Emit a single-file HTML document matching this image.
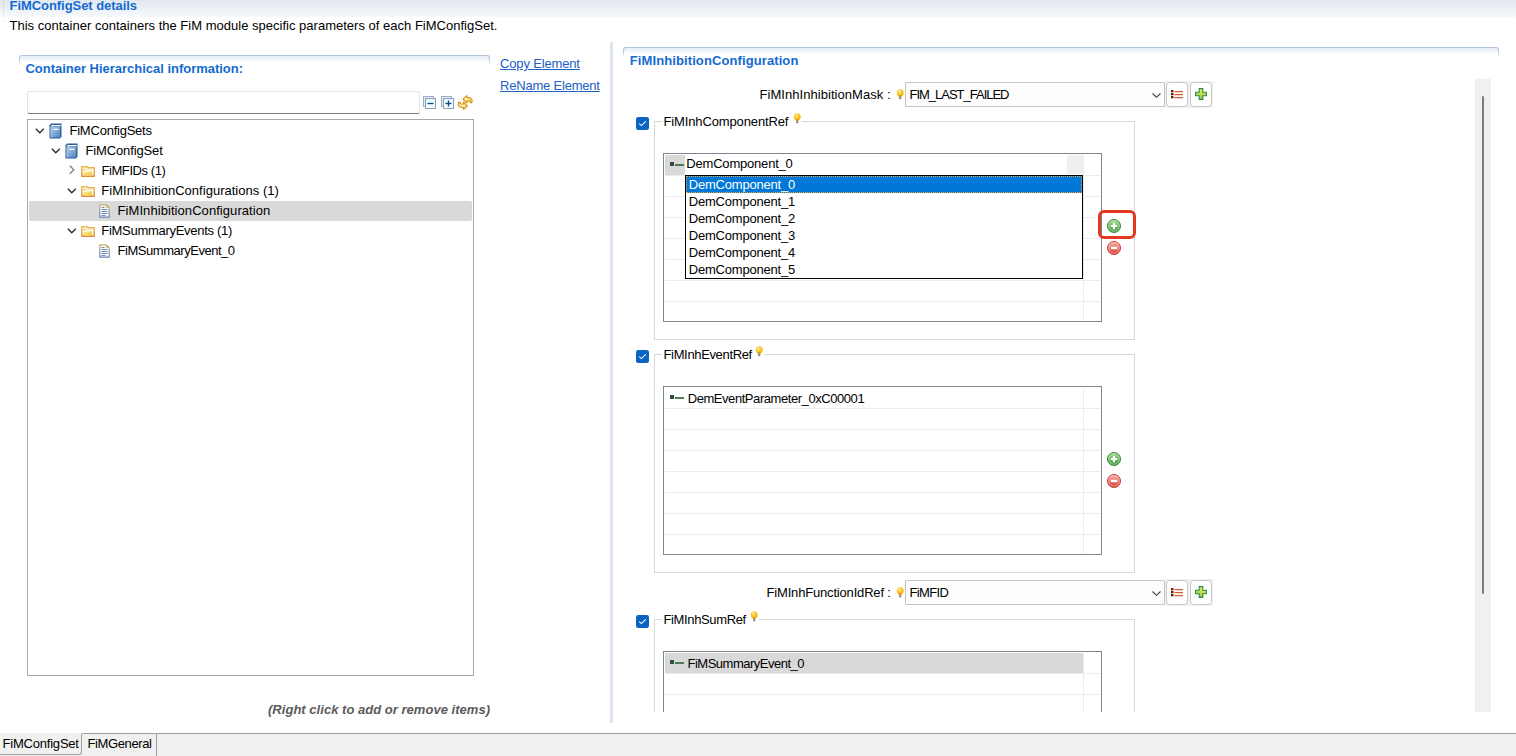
<!DOCTYPE html>
<html><head><meta charset="utf-8"><style>
*{margin:0;padding:0;box-sizing:border-box}
html,body{width:1516px;height:756px;overflow:hidden;background:#fff;font-family:"Liberation Sans",sans-serif;color:#000}
.a{position:absolute}
.t{position:absolute;white-space:nowrap;font-size:13px;line-height:15px}
svg{overflow:visible}
</style></head><body>
<div class="a" style="left:0px;top:0px;width:1516px;height:17px;background:linear-gradient(#e2e8f1,#f7f9fb)"></div>
<div class="a" style="left:3px;top:0px;width:1px;height:22px;background:linear-gradient(#cdd6e4,#f3f5f9)"></div>
<div class="t" style="left:9.5px;top:-2.01px;font-size:13px;font-weight:bold;color:#146ad0;letter-spacing:-0.055px;">FiMConfigSet details</div>
<div class="t" style="left:9.5px;top:17.99px;font-size:13px;letter-spacing:0.011px;">This container containers the FiM module specific parameters of each FiMConfigSet.</div>
<div class="a" style="left:19px;top:55px;width:471px;height:10px;border:1px solid #b2c3db;border-bottom:none;border-radius:3px 3px 0 0;background:linear-gradient(#e6edf6,#fff 7px)"></div><div class="a" style="left:18px;top:59px;width:473px;height:7px;background:linear-gradient(rgba(255,255,255,0),#fff)"></div>
<div class="t" style="left:25.5px;top:60.59px;font-size:13px;font-weight:bold;color:#146ad0;letter-spacing:-0.019px;">Container Hierarchical information:</div>
<div class="a" style="left:27px;top:91px;width:393px;height:23px;border:1px solid #e4e4e4;border-bottom:1px solid #7a7a7a;border-radius:2px"></div>
<svg width="0" height="0" style="position:absolute"><defs><linearGradient id="gsq" x1="0" y1="0" x2="0" y2="1"><stop offset="0" stop-color="#e4f6ff"/><stop offset="1" stop-color="#f4fbff"/></linearGradient><linearGradient id="gbook" x1="0" y1="0" x2="1" y2="1"><stop offset="0" stop-color="#b4d0ec"/><stop offset="1" stop-color="#4f83c1"/></linearGradient><linearGradient id="gfold" x1="0" y1="0" x2="1" y2="1"><stop offset="0" stop-color="#fbf1c4"/><stop offset="1" stop-color="#f0c419"/></linearGradient><linearGradient id="gfoldb" x1="0" y1="0" x2="0" y2="1"><stop offset="0" stop-color="#e6b74a"/><stop offset="1" stop-color="#e08c34"/></linearGradient><linearGradient id="gpage" x1="0" y1="0" x2="0" y2="1"><stop offset="0" stop-color="#c8b070"/><stop offset="1" stop-color="#6f84b0"/></linearGradient><radialGradient id="gbulb" cx="0.4" cy="0.35" r="0.6"><stop offset="0" stop-color="#ffe27a"/><stop offset="1" stop-color="#f7b500"/></radialGradient><linearGradient id="gplus" x1="0" y1="0" x2="0" y2="1"><stop offset="0" stop-color="#e9ef5a"/><stop offset="1" stop-color="#9cc540"/></linearGradient><linearGradient id="gadd" x1="0" y1="0" x2="0" y2="1"><stop offset="0" stop-color="#a6dc95"/><stop offset="1" stop-color="#3a9638"/></linearGradient><linearGradient id="grem" x1="0" y1="0" x2="0" y2="1"><stop offset="0" stop-color="#f9b7ad"/><stop offset="1" stop-color="#d6352c"/></linearGradient><radialGradient id="gsync" cx="0.4" cy="0.4" r="0.7"><stop offset="0" stop-color="#fffbe0"/><stop offset="1" stop-color="#f3cb45"/></radialGradient></defs></svg>
<svg class="a" style="left:423px;top:96px" width="14" height="14" viewBox="0 0 14 14"><rect x="0.5" y="0.5" width="10" height="10" fill="#d8f0fd" stroke="#a3abc0"/><rect x="2.5" y="2.5" width="10" height="10" fill="url(#gsq)" stroke="#959db3"/><path d="M4.5 7.5H10.5" stroke="#0c4a7a" stroke-width="1.3"/></svg>
<svg class="a" style="left:441px;top:96px" width="14" height="14" viewBox="0 0 14 14"><rect x="0.5" y="0.5" width="10" height="10" fill="#d8f0fd" stroke="#a3abc0"/><rect x="2.5" y="2.5" width="10" height="10" fill="url(#gsq)" stroke="#959db3"/><path d="M4.5 7.5H10.5" stroke="#0c4a7a" stroke-width="1.3"/><path d="M7.5 4.5V10.5" stroke="#0c4a7a" stroke-width="1.3"/></svg>
<svg class="a" style="left:458px;top:95px" width="15" height="16" viewBox="0 0 15 16"><polygon points="5.0,4.2 8.8,0.6 9.2,2.6 12.2,2.9 14.0,4.6 13.9,7.6 12.2,7.7 11.6,6.0 9.2,5.8 8.8,7.9" fill="url(#gsync)" stroke="#d38f0a" stroke-width="1.1" stroke-linejoin="round"/><polygon points="9.4,10.8 5.6,14.4 5.2,12.4 2.2,12.1 0.4,10.4 0.5,7.4 2.2,7.3 2.8,9.0 5.2,9.2 5.6,7.1" fill="url(#gsync)" stroke="#d38f0a" stroke-width="1.1" stroke-linejoin="round"/></svg>
<div class="a" style="left:27px;top:119px;width:447px;height:557px;border:1px solid #a6a8b1"></div>
<div class="a" style="left:29px;top:201px;width:443px;height:20px;background:#d9d9d9;border-radius:2px"></div>
<svg class="a" style="left:35px;top:128px" width="10" height="6" viewBox="0 0 10 6"><path d="M0.8 0.8 L4.8 4.8 L8.8 0.8" fill="none" stroke="#2b2b2b" stroke-width="1.3"/></svg>
<svg class="a" style="left:49px;top:123px" width="13" height="16" viewBox="0 0 13 16"><path d="M0.5 2.2 L2.2 0.5 H12.5 V13.8 L10.8 15.5 H0.5 Z" fill="#2f5b98"/><rect x="1.6" y="3.4" width="9.6" height="11" fill="url(#gbook)"/><rect x="1.6" y="3.4" width="1.4" height="11" fill="#a9c8ea" opacity="0.8"/><rect x="2.2" y="2" width="9.6" height="1.1" fill="#fff"/><rect x="4.6" y="5.8" width="5" height="1.2" fill="#fff"/></svg>
<div class="t" style="left:69.5px;top:122.99px;font-size:13px;letter-spacing:-0.230px;">FiMConfigSets</div>
<svg class="a" style="left:51px;top:148px" width="10" height="6" viewBox="0 0 10 6"><path d="M0.8 0.8 L4.8 4.8 L8.8 0.8" fill="none" stroke="#2b2b2b" stroke-width="1.3"/></svg>
<svg class="a" style="left:65px;top:143px" width="13" height="16" viewBox="0 0 13 16"><path d="M0.5 2.2 L2.2 0.5 H12.5 V13.8 L10.8 15.5 H0.5 Z" fill="#2f5b98"/><rect x="1.6" y="3.4" width="9.6" height="11" fill="url(#gbook)"/><rect x="1.6" y="3.4" width="1.4" height="11" fill="#a9c8ea" opacity="0.8"/><rect x="2.2" y="2" width="9.6" height="1.1" fill="#fff"/><rect x="4.6" y="5.8" width="5" height="1.2" fill="#fff"/></svg>
<div class="t" style="left:85.5px;top:142.99px;font-size:13px;letter-spacing:-0.133px;">FiMConfigSet</div>
<svg class="a" style="left:69px;top:165px" width="6" height="10" viewBox="0 0 6 10"><path d="M0.8 0.8 L4.8 4.8 L0.8 8.8" fill="none" stroke="#808080" stroke-width="1.3"/></svg>
<svg class="a" style="left:81px;top:166px" width="14" height="11" viewBox="0 0 14 11"><path d="M0.8 0.8 H6 L7 1.8 H13.2 V10.2 H0.8 Z" fill="#fff" stroke="url(#gfoldb)" stroke-width="1.4" stroke-linejoin="round"/><path d="M2 2.5 H4 L5 3.3 H11 V4 H5 L3.8 5 H2 Z" fill="#f3d36a" opacity="0.8"/><path d="M2 6 H4.5 L5.5 5.3 H11.2 V9.3 H2 Z" fill="url(#gfold)"/></svg>
<div class="t" style="left:101.5px;top:162.99px;font-size:13px;letter-spacing:-0.429px;">FiMFIDs (1)</div>
<svg class="a" style="left:67px;top:188px" width="10" height="6" viewBox="0 0 10 6"><path d="M0.8 0.8 L4.8 4.8 L8.8 0.8" fill="none" stroke="#2b2b2b" stroke-width="1.3"/></svg>
<svg class="a" style="left:81px;top:186px" width="14" height="11" viewBox="0 0 14 11"><path d="M0.8 0.8 H6 L7 1.8 H13.2 V10.2 H0.8 Z" fill="#fff" stroke="url(#gfoldb)" stroke-width="1.4" stroke-linejoin="round"/><path d="M2 2.5 H4 L5 3.3 H11 V4 H5 L3.8 5 H2 Z" fill="#f3d36a" opacity="0.8"/><path d="M2 6 H4.5 L5.5 5.3 H11.2 V9.3 H2 Z" fill="url(#gfold)"/></svg>
<div class="t" style="left:101.3px;top:182.99px;font-size:13px;letter-spacing:0.017px;">FiMInhibitionConfigurations (1)</div>
<svg class="a" style="left:99px;top:204px" width="11" height="14" viewBox="0 0 11 14"><path d="M0.8 0.8 H7.2 L10.2 3.8 V13.2 H0.8 Z" fill="#f6f9ff" stroke="url(#gpage)" stroke-width="1.2"/><path d="M7.2 0.8 L10.2 3.8 H7.2 Z" fill="#e0a848"/><path d="M2.5 3.5 H5.5 M2.5 5.5 H8.5 M2.5 7.5 H8.5 M2.5 9.5 H8.5 M2.5 11.5 H6.5" stroke="#7088b4" stroke-width="1"/></svg>
<div class="t" style="left:117.6px;top:202.99px;font-size:13px;letter-spacing:0.065px;">FiMInhibitionConfiguration</div>
<svg class="a" style="left:67px;top:228px" width="10" height="6" viewBox="0 0 10 6"><path d="M0.8 0.8 L4.8 4.8 L8.8 0.8" fill="none" stroke="#2b2b2b" stroke-width="1.3"/></svg>
<svg class="a" style="left:81px;top:226px" width="14" height="11" viewBox="0 0 14 11"><path d="M0.8 0.8 H6 L7 1.8 H13.2 V10.2 H0.8 Z" fill="#fff" stroke="url(#gfoldb)" stroke-width="1.4" stroke-linejoin="round"/><path d="M2 2.5 H4 L5 3.3 H11 V4 H5 L3.8 5 H2 Z" fill="#f3d36a" opacity="0.8"/><path d="M2 6 H4.5 L5.5 5.3 H11.2 V9.3 H2 Z" fill="url(#gfold)"/></svg>
<div class="t" style="left:101.3px;top:222.99px;font-size:13px;letter-spacing:-0.291px;">FiMSummaryEvents (1)</div>
<svg class="a" style="left:99px;top:244px" width="11" height="14" viewBox="0 0 11 14"><path d="M0.8 0.8 H7.2 L10.2 3.8 V13.2 H0.8 Z" fill="#f6f9ff" stroke="url(#gpage)" stroke-width="1.2"/><path d="M7.2 0.8 L10.2 3.8 H7.2 Z" fill="#e0a848"/><path d="M2.5 3.5 H5.5 M2.5 5.5 H8.5 M2.5 7.5 H8.5 M2.5 9.5 H8.5 M2.5 11.5 H6.5" stroke="#7088b4" stroke-width="1"/></svg>
<div class="t" style="left:117.6px;top:242.99px;font-size:13px;letter-spacing:-0.469px;">FiMSummaryEvent_0</div>
<div class="t" style="left:268px;top:701.99px;font-size:13px;font-weight:bold;font-style:italic;color:#5b5b5b;letter-spacing:0.027px;">(Right click to add or remove items)</div>
<div class="t" style="left:500px;top:56.19px;font-size:13px;color:#2060c4;letter-spacing:-0.152px;text-decoration:underline;">Copy Element</div>
<div class="t" style="left:500px;top:77.89px;font-size:13px;color:#2060c4;letter-spacing:-0.202px;text-decoration:underline;">ReName Element</div>
<div class="a" style="left:610px;top:42px;width:3px;height:681px;background:#dfe5ee"></div>
<div class="a" style="left:623px;top:47px;width:876px;height:10px;border:1px solid #b2c3db;border-bottom:none;border-radius:3px 3px 0 0;background:linear-gradient(#e6edf6,#fff 7px)"></div><div class="a" style="left:622px;top:51px;width:878px;height:7px;background:linear-gradient(rgba(255,255,255,0),#fff)"></div>
<div class="t" style="left:629.8px;top:52.99px;font-size:13px;font-weight:bold;color:#146ad0;letter-spacing:0.099px;">FiMInhibitionConfiguration</div>
<div class="a" style="left:1475px;top:79px;width:16px;height:633px;background:#f0f0f0"></div>
<div class="a" style="left:1482px;top:96px;width:2px;height:498px;background:#7c7c7c;border-radius:1px"></div>
<div class="t" style="left:759.5px;top:87.09px;font-size:13px;letter-spacing:0.053px;">FiMInhInhibitionMask :</div><svg class="a" style="left:896px;top:89px" width="9" height="11" viewBox="0 0 9 11"><circle cx="4.2" cy="3.8" r="3.5" fill="url(#gbulb)"/><path d="M2.6 6.5 H5.8 L5.3 8.8 H3.1 Z" fill="#c98a35"/><rect x="3.1" y="8.8" width="2.2" height="1.3" fill="#777"/><path d="M2.8 3 L4 1.6" stroke="#fff6c8" stroke-width="1.1"/></svg><div class="a" style="left:905px;top:82px;width:260px;height:25px;border:1px solid #c4c4c4;background:#fdfdfd;border-radius:1px"></div><div class="t" style="left:909.5px;top:87.09px;font-size:13px;letter-spacing:-1.011px;">FIM_LAST_FAILED</div><svg class="a" style="left:1152px;top:93px" width="9" height="5" viewBox="0 0 9 5"><path d="M0.5 0.5 L4.5 4.3 L8.5 0.5" fill="none" stroke="#404040" stroke-width="1.1"/></svg><div class="a" style="left:1165px;top:81px;width:48px;height:27px;background:#f0f0f0"></div><div class="a" style="left:1166px;top:82px;width:22px;height:25px;border:1px solid #c9c9c9;border-radius:4px;background:#fff"></div><div class="a" style="left:1190px;top:82px;width:22px;height:25px;border:1px solid #c9c9c9;border-radius:4px;background:#fff"></div><svg class="a" style="left:1171px;top:90px" width="13" height="10" viewBox="0 0 13 10"><rect x="0" y="0" width="2.5" height="2.3" fill="#6b1e0c"/><rect x="0" y="3" width="2.5" height="2.3" fill="#6b1e0c"/><rect x="0" y="6" width="2.5" height="2.3" fill="#6b1e0c"/><path d="M3.4 1.6 H12 M3.4 4.6 H12 M3.4 7.6 H12" stroke="#d55a36" stroke-width="1.05"/></svg><svg class="a" style="left:1195px;top:88px" width="13" height="13" viewBox="0 0 13 13"><path d="M4.2 0.6 H7.8 V4.2 H11.4 V7.8 H7.8 V11.4 H4.2 V7.8 H0.6 V4.2 H4.2 Z" fill="url(#gplus)" stroke="#2c8a4a" stroke-width="1.1"/></svg>
<svg class="a" style="left:636px;top:117px" width="13" height="13" viewBox="0 0 13 13"><rect x="0" y="0" width="13" height="13" rx="2.3" fill="#0a62c1"/><path d="M3.2 6.6 L5.4 8.6 L9.8 4.4" fill="none" stroke="#fff" stroke-width="1.1"/></svg><div class="a" style="left:654px;top:121px;width:481px;height:219px;border:1px solid #d9d9d9;border-top:none"></div><div class="a" style="left:654px;top:121px;width:8px;height:1px;background:#d9d9d9"></div><div class="a" style="left:802px;top:121px;width:333px;height:1px;background:#d9d9d9"></div><div class="t" style="left:663.5px;top:113.59px;font-size:13px;letter-spacing:-0.130px;">FiMInhComponentRef</div><svg class="a" style="left:793px;top:112.5px" width="9" height="11" viewBox="0 0 9 11"><circle cx="4.2" cy="3.8" r="3.5" fill="url(#gbulb)"/><path d="M2.6 6.5 H5.8 L5.3 8.8 H3.1 Z" fill="#c98a35"/><rect x="3.1" y="8.8" width="2.2" height="1.3" fill="#777"/><path d="M2.8 3 L4 1.6" stroke="#fff6c8" stroke-width="1.1"/></svg>
<div class="a" style="left:663px;top:153px;width:439px;height:169px;border:1px solid #7f8590;background:#fff"></div><div class="a" style="left:665px;top:175px;width:435px;height:1px;background:#ececec"></div><div class="a" style="left:665px;top:196px;width:435px;height:1px;background:#ececec"></div><div class="a" style="left:665px;top:217px;width:435px;height:1px;background:#ececec"></div><div class="a" style="left:665px;top:238px;width:435px;height:1px;background:#ececec"></div><div class="a" style="left:665px;top:259px;width:435px;height:1px;background:#ececec"></div><div class="a" style="left:665px;top:280px;width:435px;height:1px;background:#ececec"></div><div class="a" style="left:665px;top:301px;width:435px;height:1px;background:#ececec"></div><div class="a" style="left:1083px;top:155px;width:1px;height:165px;background:#e6ecf4"></div>
<div class="a" style="left:665px;top:155px;width:20px;height:20px;background:#d9d9d9"></div>
<div class="a" style="left:1067px;top:155px;width:17px;height:19px;background:#efefef"></div>
<svg class="a" style="left:670px;top:162px" width="15" height="5" viewBox="0 0 15 5"><rect x="0" y="0" width="4" height="4" fill="#2f4f37"/><rect x="5" y="2" width="9" height="2" fill="#4f7a58"/></svg>
<div class="t" style="left:686.3px;top:156.29px;font-size:13px;letter-spacing:-0.197px;">DemComponent_0</div>
<div class="a" style="left:685px;top:175px;width:398px;height:104px;border:1px solid #000;background:#fff"></div>
<div class="a" style="left:686px;top:176px;width:396px;height:17px;background:#0078d7;outline:1px dotted #f0a040;outline-offset:-1px"></div>
<div class="t" style="left:688.7px;top:177.49px;font-size:13px;color:#fff;letter-spacing:-0.197px;">DemComponent_0</div>
<div class="t" style="left:688.7px;top:194.49px;font-size:13px;color:#000;letter-spacing:-0.197px;">DemComponent_1</div>
<div class="t" style="left:688.7px;top:211.49px;font-size:13px;color:#000;letter-spacing:-0.197px;">DemComponent_2</div>
<div class="t" style="left:688.7px;top:228.49px;font-size:13px;color:#000;letter-spacing:-0.197px;">DemComponent_3</div>
<div class="t" style="left:688.7px;top:245.49px;font-size:13px;color:#000;letter-spacing:-0.197px;">DemComponent_4</div>
<div class="t" style="left:688.7px;top:262.49px;font-size:13px;color:#000;letter-spacing:-0.197px;">DemComponent_5</div>
<svg class="a" style="left:1107px;top:219px" width="14" height="14" viewBox="0 0 14 14"><circle cx="7" cy="7" r="6.5" fill="url(#gadd)" stroke="#3a8a36" stroke-width="1"/><circle cx="7" cy="7" r="5.2" fill="none" stroke="#c9ebc2" stroke-width="0.8" opacity="0.7"/><path d="M7 3.8V10.2M3.8 7H10.2" stroke="#fff" stroke-width="2.2"/></svg><svg class="a" style="left:1107px;top:241px" width="14" height="14" viewBox="0 0 14 14"><circle cx="7" cy="7" r="6.5" fill="url(#grem)" stroke="#cf3b33" stroke-width="1"/><circle cx="7" cy="7" r="5.2" fill="none" stroke="#fbd2cc" stroke-width="0.8" opacity="0.7"/><path d="M3.8 7H10.2" stroke="#fff" stroke-width="2.4"/></svg>
<div class="a" style="left:1098px;top:210px;width:38px;height:29px;border:3px solid #e5391f;border-radius:6px"></div>
<svg class="a" style="left:636px;top:350px" width="13" height="13" viewBox="0 0 13 13"><rect x="0" y="0" width="13" height="13" rx="2.3" fill="#0a62c1"/><path d="M3.2 6.6 L5.4 8.6 L9.8 4.4" fill="none" stroke="#fff" stroke-width="1.1"/></svg><div class="a" style="left:654px;top:354px;width:481px;height:219px;border:1px solid #d9d9d9;border-top:none"></div><div class="a" style="left:654px;top:354px;width:8px;height:1px;background:#d9d9d9"></div><div class="a" style="left:764px;top:354px;width:371px;height:1px;background:#d9d9d9"></div><div class="t" style="left:663.5px;top:346.59px;font-size:13px;letter-spacing:-0.348px;">FiMInhEventRef</div><svg class="a" style="left:755px;top:345.5px" width="9" height="11" viewBox="0 0 9 11"><circle cx="4.2" cy="3.8" r="3.5" fill="url(#gbulb)"/><path d="M2.6 6.5 H5.8 L5.3 8.8 H3.1 Z" fill="#c98a35"/><rect x="3.1" y="8.8" width="2.2" height="1.3" fill="#777"/><path d="M2.8 3 L4 1.6" stroke="#fff6c8" stroke-width="1.1"/></svg>
<div class="a" style="left:663px;top:386px;width:439px;height:169px;border:1px solid #7f8590;background:#fff"></div><div class="a" style="left:665px;top:408px;width:435px;height:1px;background:#ececec"></div><div class="a" style="left:665px;top:429px;width:435px;height:1px;background:#ececec"></div><div class="a" style="left:665px;top:450px;width:435px;height:1px;background:#ececec"></div><div class="a" style="left:665px;top:471px;width:435px;height:1px;background:#ececec"></div><div class="a" style="left:665px;top:492px;width:435px;height:1px;background:#ececec"></div><div class="a" style="left:665px;top:513px;width:435px;height:1px;background:#ececec"></div><div class="a" style="left:665px;top:534px;width:435px;height:1px;background:#ececec"></div><div class="a" style="left:1083px;top:388px;width:1px;height:165px;background:#e6ecf4"></div>
<svg class="a" style="left:670px;top:395px" width="15" height="5" viewBox="0 0 15 5"><rect x="0" y="0" width="4" height="4" fill="#2f4f37"/><rect x="5" y="2" width="9" height="2" fill="#4f7a58"/></svg>
<div class="t" style="left:687.7px;top:390.79px;font-size:13px;letter-spacing:-0.438px;">DemEventParameter_0xC00001</div>
<svg class="a" style="left:1107px;top:452px" width="14" height="14" viewBox="0 0 14 14"><circle cx="7" cy="7" r="6.5" fill="url(#gadd)" stroke="#3a8a36" stroke-width="1"/><circle cx="7" cy="7" r="5.2" fill="none" stroke="#c9ebc2" stroke-width="0.8" opacity="0.7"/><path d="M7 3.8V10.2M3.8 7H10.2" stroke="#fff" stroke-width="2.2"/></svg><svg class="a" style="left:1107px;top:474px" width="14" height="14" viewBox="0 0 14 14"><circle cx="7" cy="7" r="6.5" fill="url(#grem)" stroke="#cf3b33" stroke-width="1"/><circle cx="7" cy="7" r="5.2" fill="none" stroke="#fbd2cc" stroke-width="0.8" opacity="0.7"/><path d="M3.8 7H10.2" stroke="#fff" stroke-width="2.4"/></svg>
<div class="t" style="left:766.5px;top:584.89px;font-size:13px;letter-spacing:-0.175px;">FiMInhFunctionIdRef :</div><svg class="a" style="left:896px;top:587px" width="9" height="11" viewBox="0 0 9 11"><circle cx="4.2" cy="3.8" r="3.5" fill="url(#gbulb)"/><path d="M2.6 6.5 H5.8 L5.3 8.8 H3.1 Z" fill="#c98a35"/><rect x="3.1" y="8.8" width="2.2" height="1.3" fill="#777"/><path d="M2.8 3 L4 1.6" stroke="#fff6c8" stroke-width="1.1"/></svg><div class="a" style="left:905px;top:580px;width:260px;height:25px;border:1px solid #c4c4c4;background:#fdfdfd;border-radius:1px"></div><div class="t" style="left:909.5px;top:584.89px;font-size:13px;letter-spacing:-0.619px;">FiMFID</div><svg class="a" style="left:1152px;top:591px" width="9" height="5" viewBox="0 0 9 5"><path d="M0.5 0.5 L4.5 4.3 L8.5 0.5" fill="none" stroke="#404040" stroke-width="1.1"/></svg><div class="a" style="left:1165px;top:579px;width:48px;height:27px;background:#f0f0f0"></div><div class="a" style="left:1166px;top:580px;width:22px;height:25px;border:1px solid #c9c9c9;border-radius:4px;background:#fff"></div><div class="a" style="left:1190px;top:580px;width:22px;height:25px;border:1px solid #c9c9c9;border-radius:4px;background:#fff"></div><svg class="a" style="left:1171px;top:588px" width="13" height="10" viewBox="0 0 13 10"><rect x="0" y="0" width="2.5" height="2.3" fill="#6b1e0c"/><rect x="0" y="3" width="2.5" height="2.3" fill="#6b1e0c"/><rect x="0" y="6" width="2.5" height="2.3" fill="#6b1e0c"/><path d="M3.4 1.6 H12 M3.4 4.6 H12 M3.4 7.6 H12" stroke="#d55a36" stroke-width="1.05"/></svg><svg class="a" style="left:1195px;top:586px" width="13" height="13" viewBox="0 0 13 13"><path d="M4.2 0.6 H7.8 V4.2 H11.4 V7.8 H7.8 V11.4 H4.2 V7.8 H0.6 V4.2 H4.2 Z" fill="url(#gplus)" stroke="#2c8a4a" stroke-width="1.1"/></svg>
<div class="a" style="left:0;top:0;width:1516px;height:712px;overflow:hidden"><svg class="a" style="left:636px;top:615px" width="13" height="13" viewBox="0 0 13 13"><rect x="0" y="0" width="13" height="13" rx="2.3" fill="#0a62c1"/><path d="M3.2 6.6 L5.4 8.6 L9.8 4.4" fill="none" stroke="#fff" stroke-width="1.1"/></svg><div class="a" style="left:654px;top:619px;width:481px;height:182px;border:1px solid #d9d9d9;border-top:none"></div><div class="a" style="left:654px;top:619px;width:8px;height:1px;background:#d9d9d9"></div><div class="a" style="left:759px;top:619px;width:376px;height:1px;background:#d9d9d9"></div><div class="t" style="left:663.5px;top:611.59px;font-size:13px;letter-spacing:-0.364px;">FiMInhSumRef</div><svg class="a" style="left:750px;top:610.5px" width="9" height="11" viewBox="0 0 9 11"><circle cx="4.2" cy="3.8" r="3.5" fill="url(#gbulb)"/><path d="M2.6 6.5 H5.8 L5.3 8.8 H3.1 Z" fill="#c98a35"/><rect x="3.1" y="8.8" width="2.2" height="1.3" fill="#777"/><path d="M2.8 3 L4 1.6" stroke="#fff6c8" stroke-width="1.1"/></svg><div class="a" style="left:663px;top:651px;width:439px;height:150px;border:1px solid #7f8590;background:#fff"></div><div class="a" style="left:665px;top:673px;width:435px;height:1px;background:#ececec"></div><div class="a" style="left:665px;top:694px;width:435px;height:1px;background:#ececec"></div><div class="a" style="left:665px;top:715px;width:435px;height:1px;background:#ececec"></div><div class="a" style="left:665px;top:736px;width:435px;height:1px;background:#ececec"></div><div class="a" style="left:665px;top:757px;width:435px;height:1px;background:#ececec"></div><div class="a" style="left:665px;top:778px;width:435px;height:1px;background:#ececec"></div><div class="a" style="left:1083px;top:653px;width:1px;height:146px;background:#e6ecf4"></div><div class="a" style="left:665px;top:653px;width:418px;height:20px;background:#d9d9d9"></div><svg class="a" style="left:670px;top:660px" width="15" height="5" viewBox="0 0 15 5"><rect x="0" y="0" width="4" height="4" fill="#2f4f37"/><rect x="5" y="2" width="9" height="2" fill="#4f7a58"/></svg><div class="t" style="left:687.5px;top:656.19px;font-size:13px;letter-spacing:-0.494px;">FiMSummaryEvent_0</div></div>
<div class="a" style="left:0px;top:733px;width:1516px;height:23px;background:#f0f0f0;border-top:1px solid #a0a0a0"></div>
<div class="a" style="left:0px;top:733px;width:82px;height:22px;background:#f0f0f0;border-bottom:1px solid #a0a0a0;border-right:1px solid #a0a0a0;border-bottom-right-radius:3px"></div>
<div class="a" style="left:82px;top:733px;width:75px;height:23px;border-right:1px solid #a0a0a0"></div>
<div class="a" style="left:0px;top:733px;width:82px;height:1px;background:#f0f0f0"></div>
<div class="t" style="left:2.5px;top:735.59px;font-size:13px;letter-spacing:-0.206px;">FiMConfigSet</div>
<div class="t" style="left:87.4px;top:735.59px;font-size:13px;letter-spacing:-0.369px;">FiMGeneral</div>
</body></html>
